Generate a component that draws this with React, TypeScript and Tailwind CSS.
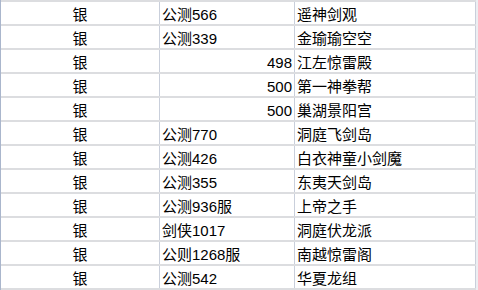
const rows: [string, string, string][] = [
  ['银', '公测566', '遥神剑观'],
  ['银', '公测339', '金瑜瑜空空'],
  ['银', '498', '江左惊雷殿'],
  ['银', '500', '第一神拳帮'],
  ['银', '500', '巢湖景阳宫'],
  ['银', '公测770', '洞庭飞剑岛'],
  ['银', '公测426', '白衣神童小剑魔'],
  ['银', '公测355', '东夷天剑岛'],
  ['银', '公测936服', '上帝之手'],
  ['银', '剑侠1017', '洞庭伏龙派'],
  ['银', '公则1268服', '南越惊雷阁'],
  ['银', '公测542', '华夏龙组'],
];

export default function App() {
  return (
    <div
      className="w-[478px] h-[290px] overflow-hidden bg-white flex text-[15px] leading-none text-black"
      style={{ fontFamily: '"Liberation Sans", "Noto Sans CJK SC", sans-serif' }}
    >
      <div className="w-px bg-[#aab6cc]" />
      <div className="flex flex-col w-[475px]">
        {rows.map(([a, b, c], i) => {
          const numeric = /^\d+$/.test(b);
          return (
            <div key={i} className="h-[24px] border-t-2 border-[#dcdde0] flex">
              <div className="w-[159px] border-r border-[#c9cfdb] flex items-center justify-center pt-[2px]">
                {a}
              </div>
              <div
                className={`w-[135px] border-r border-[#c9cfdb] flex items-center pt-[2px] overflow-hidden whitespace-nowrap ${
                  numeric ? 'justify-end pr-[2px]' : 'pl-[2px]'
                }`}
              >
                {b}
              </div>
              <div className="w-[181px] border-r border-[#c9cfdb] flex items-center pl-[2px] pt-[2px] whitespace-nowrap">
                {c}
              </div>
            </div>
          );
        })}
        <div className="h-[2px] bg-[#dcdde0]" />
      </div>
      <div className="flex-1 bg-[#eceef2]" />
    </div>
  );
}
